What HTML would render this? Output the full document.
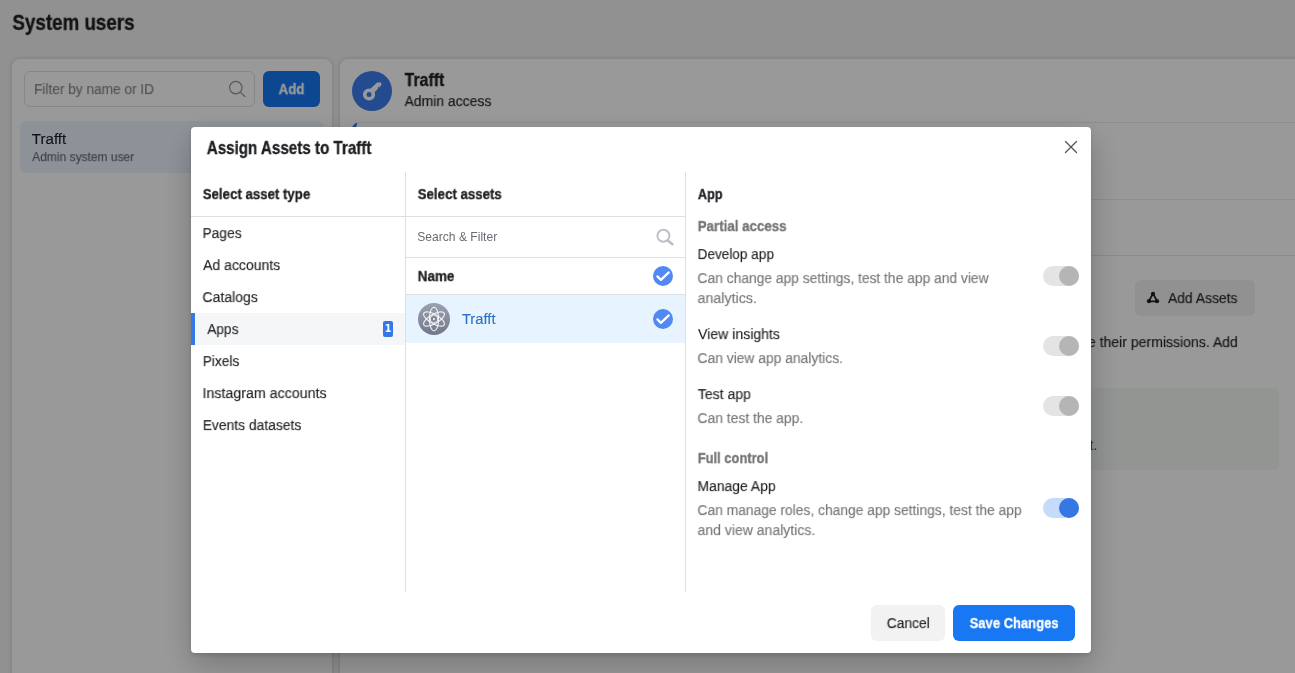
<!DOCTYPE html>
<html lang="en">
<head>
<meta charset="utf-8">
<title>System users</title>
<style>
*{box-sizing:border-box;margin:0;padding:0}
html,body{width:1295px;height:673px;overflow:hidden}
body{background:#f2f2f2;font-family:"Liberation Sans",sans-serif;color:#1c1e21;font-size:14px;position:relative}
.abs{position:absolute}
.t{position:absolute;white-space:nowrap;line-height:20px;transform-origin:0 50%;will-change:transform}
#page{position:absolute;left:0;top:0;width:1295px;height:673px;overflow:hidden}
#overlay{position:absolute;left:0;top:0;width:1295px;height:673px;background:rgba(0,0,0,.4)}
.panel{position:absolute;background:#fff;border-radius:8px;box-shadow:0 0 4px rgba(0,0,0,.16)}
.hl{position:absolute;height:1px;background:#dddfe2}
.vl{position:absolute;width:1px;background:#dddfe2}
#modal{position:absolute;left:191px;top:127px;width:900px;height:526px;background:#fff;border-radius:4px;box-shadow:0 12px 32px rgba(0,0,0,.23),0 2px 4px rgba(0,0,0,.12)}
.tog{position:absolute;width:36px;height:20px;border-radius:10px;background:#e4e4e4}
.tog b{position:absolute;right:0;top:0;width:20px;height:20px;border-radius:50%;background:#b5b5b5}
.tog.on{background:#c4dcfa}
.tog.on b{background:#3578e5}
</style>
</head>
<body>
<div id="page">
  <div class="t" style="left:12px;top:13px;font-size:20.60px;color:#1c1e21;transform-origin:0 17px;transform:translateX(0.41px) scale(0.9117,1.06);font-weight:bold;-webkit-text-stroke:.3px">System users</div>
  <div class="panel" style="left:12px;top:59px;width:320px;height:640px"></div>
  <div class="abs" style="left:24px;top:71px;width:231px;height:36px;border:1px solid #dddfe2;border-radius:6px;background:#fff"></div>
  <div class="t" style="left:34px;top:79px;font-size:14.42px;color:#84878c;transform-origin:0 15px;transform:translateX(0.03px) scale(0.9485,1.06);-webkit-text-stroke:.12px">Filter by name or ID</div>
  <svg class="abs" style="left:226px;top:78px" width="22" height="22" viewBox="0 0 22 22"><circle cx="9.8" cy="9.6" r="6.2" fill="none" stroke="#8d949e" stroke-width="1.2"/><path d="M14.3 14.1l4.6 4.4" stroke="#8d949e" stroke-width="1.2" stroke-linecap="round"/></svg>
  <div class="abs" style="left:263px;top:71px;width:57px;height:36px;border-radius:6px;background:#1877f2"></div>
  <div class="t" style="left:278px;top:79px;font-size:14.42px;color:#fff;transform-origin:0 15px;transform:translateX(0.61px) scale(0.9184,1.06);font-weight:bold;-webkit-text-stroke:.3px">Add</div>
  <div class="abs" style="left:20px;top:121px;width:304px;height:52px;border-radius:6px;background:#ecf3ff"></div>
  <div class="t" style="left:31px;top:129px;font-size:14.42px;color:#1c1e21;transform-origin:0 15px;transform:translateX(0.87px) scale(1.0471,1.06);-webkit-text-stroke:.12px">Trafft</div>
  <div class="t" style="left:32px;top:147px;font-size:12.36px;color:#606770;transform-origin:0 14px;transform:translateX(0.20px) scale(0.9704,1.06);-webkit-text-stroke:.12px">Admin system user</div>

  <div class="panel" style="left:340px;top:59px;width:980px;height:640px"></div>
  <div class="abs" style="left:352px;top:70.7px;width:40px;height:40px;border-radius:50%;background:#3c7dee"></div>
  <svg class="abs" style="left:352px;top:70.7px" width="40" height="40" viewBox="0 0 40 40"><circle cx="17.05" cy="23.5" r="4.3" fill="none" stroke="#fff" stroke-width="3.6"/><path d="M17.6 18.5L25.1 11.5H29.3V14.3L27.1 16.6L26.5 16 25.6 16.9 26.2 17.5 22 21.8Z" fill="#fff"/></svg>
  <div class="t" style="left:404px;top:70px;font-size:16.48px;color:#1c1e21;transform-origin:0 16px;transform:translateX(0.60px) scale(0.9630,1.06);font-weight:bold;-webkit-text-stroke:.3px">Trafft</div>
  <div class="t" style="left:404px;top:91px;font-size:14.42px;color:#1c1e21;transform-origin:0 15px;transform:translateX(0.60px) scale(0.9675,1.06);-webkit-text-stroke:.12px">Admin access</div>
  <div class="hl" style="left:357px;top:122px;width:960px;background:#e9ebee"></div>
  <svg class="abs" style="left:351px;top:122px" width="8" height="6" viewBox="0 0 8 6"><path d="M.8 5.5Q2.6 2 5.2 .8Q6.4 .5 6.2 1.6L5.2 5.5Z" fill="#3c7dee"/></svg>
  <div class="hl" style="left:340px;top:199px;width:960px;background:#e9ebee"></div>
  <div class="hl" style="left:340px;top:255px;width:960px;background:#e4e6e9"></div>
  <div class="abs" style="left:1135px;top:280px;width:120px;height:36px;border-radius:6px;background:#f2f2f2"></div>
  <svg class="abs" style="left:1146px;top:291px" width="14" height="14" viewBox="0 0 14 14"><path d="M7 2.6L2.7 10.4H11.3Z" fill="none" stroke="#1c1e21" stroke-width="1.8" stroke-linejoin="round"/><circle cx="7" cy="2.8" r="2.1" fill="#1c1e21"/><circle cx="3" cy="10.2" r="2.1" fill="#1c1e21"/><circle cx="11" cy="10.2" r="2.1" fill="#1c1e21"/></svg>
  <div class="t" style="left:1168px;top:288px;font-size:14.42px;color:#1c1e21;transform-origin:0 15px;transform:translateX(0.00px) scale(0.9644,1.06);-webkit-text-stroke:.12px">Add Assets</div>
  <div class="t" style="left:1045px;top:332px;font-size:14.42px;color:#1c1e21;transform-origin:0 15px;transform:translateX(0.02px) scale(0.9747,1.06);-webkit-text-stroke:.12px">manage their permissions. Add</div>
  <div class="abs" style="left:900px;top:388px;width:379px;height:82px;border-radius:5px;background:#f5f8f6"></div>
  <div class="t" style="left:1060px;top:435px;width:37px;text-align:right;color:#4b4f56">asset.</div>
</div>
<div id="overlay"></div>
<div id="modal">
  <div class="t" style="left:15px;top:11px;font-size:16.48px;color:#1c1e21;transform-origin:0 16px;transform:translateX(0.76px) scale(0.9210,1.06);font-weight:bold;-webkit-text-stroke:.3px">Assign Assets to Trafft</div>
  <svg class="abs" style="left:873px;top:13px" width="14" height="14" viewBox="0 0 14 14"><path d="M1.5 1.5l11 11M12.5 1.5L1.5 12.5" stroke="#50545d" stroke-width="1.3" stroke-linecap="round"/></svg>

  <div class="vl" style="left:214px;top:45px;height:420px"></div>
  <div class="vl" style="left:494px;top:45px;height:420px"></div>
  <div class="hl" style="left:0;top:89px;width:494px"></div>

  <div class="t" style="left:11px;top:57px;font-size:14.42px;color:#1c1e21;transform-origin:0 15px;transform:translateX(0.76px) scale(0.9191,1.06);font-weight:bold;-webkit-text-stroke:.3px">Select asset type</div>
  <div class="abs" style="left:0;top:186px;width:214px;height:32px;background:#f5f6f7"></div>
  <div class="abs" style="left:0;top:186px;width:4px;height:32px;background:#3578e5"></div>
  <div class="t" style="left:11px;top:96px;font-size:14.42px;color:#1c1e21;transform-origin:0 15px;transform:translateX(0.53px) scale(0.9542,1.06);-webkit-text-stroke:.12px">Pages</div>
  <div class="t" style="left:12px;top:128px;font-size:14.42px;color:#1c1e21;transform-origin:0 15px;transform:translateX(0.10px) scale(0.9734,1.06);-webkit-text-stroke:.12px">Ad accounts</div>
  <div class="t" style="left:11px;top:160px;font-size:14.42px;color:#1c1e21;transform-origin:0 15px;transform:translateX(0.43px) scale(0.9719,1.06);-webkit-text-stroke:.12px">Catalogs</div>
  <div class="t" style="left:16px;top:192px;font-size:14.42px;color:#1c1e21;transform-origin:0 15px;transform:translateX(0.30px) scale(0.9473,1.06);-webkit-text-stroke:.12px">Apps</div>
  <div class="abs" style="left:192px;top:194px;width:10px;height:16px;border-radius:2px;background:#3578e5"></div>
  <div class="t" style="left:192px;top:196px;width:10px;text-align:center;font-family:'DejaVu Sans',sans-serif;font-weight:bold;font-size:11px;line-height:12px;color:#fff;transform:scaleX(.85);transform-origin:50% 50%">1</div>
  <div class="t" style="left:11px;top:224px;font-size:14.42px;color:#1c1e21;transform-origin:0 15px;transform:translateX(0.73px) scale(0.9517,1.06);-webkit-text-stroke:.12px">Pixels</div>
  <div class="t" style="left:11px;top:256px;font-size:14.42px;color:#1c1e21;transform-origin:0 15px;transform:translateX(0.50px) scale(0.9874,1.06);-webkit-text-stroke:.12px">Instagram accounts</div>
  <div class="t" style="left:11px;top:288px;font-size:14.42px;color:#1c1e21;transform-origin:0 15px;transform:translateX(0.72px) scale(0.9622,1.06);-webkit-text-stroke:.12px">Events datasets</div>

  <div class="t" style="left:226px;top:57px;font-size:14.42px;color:#1c1e21;transform-origin:0 15px;transform:translateX(0.75px) scale(0.9200,1.06);font-weight:bold;-webkit-text-stroke:.3px">Select assets</div>
  <div class="t" style="left:226px;top:100px;font-size:12.00px;color:#686c73;transform-origin:0 14px;transform:translateX(0.30px) scale(1.0070,1)">Search &amp; Filter</div>
  <svg class="abs" style="left:464px;top:100px" width="20" height="20" viewBox="0 0 20 20"><circle cx="8.4" cy="8.8" r="6" fill="none" stroke="#bcc0c6" stroke-width="2"/><path d="M13.4 14l4 3.2" stroke="#bcc0c6" stroke-width="2.6" stroke-linecap="round"/></svg>
  <div class="hl" style="left:215px;top:130px;width:279px"></div>
  <div class="t" style="left:226px;top:139px;font-size:14.42px;color:#1c1e21;transform-origin:0 15px;transform:translateX(0.73px) scale(0.9319,1.06);font-weight:bold;-webkit-text-stroke:.3px">Name</div>
  <div class="hl" style="left:215px;top:167px;width:279px"></div>
  <div class="abs" style="left:215px;top:168px;width:279px;height:48px;background:#e7f3ff"></div>
  <div class="abs" style="left:227px;top:176px;width:32px;height:32px;border-radius:50%;background:linear-gradient(#9aa2b2,#70788a)"></div>
  <svg class="abs" style="left:227px;top:176px" width="32" height="32" viewBox="0 0 32 32"><g fill="none" stroke="#fff" stroke-opacity=".88" stroke-width="1.1"><ellipse cx="16" cy="16" rx="4.6" ry="11.8"/><ellipse cx="16" cy="16" rx="4.6" ry="11.8" transform="rotate(60 16 16)"/><ellipse cx="16" cy="16" rx="4.6" ry="11.8" transform="rotate(-60 16 16)"/></g><path d="M16 12l3.5 2v4L16 20l-3.5-2v-4z" fill="#80889a" stroke="#fff" stroke-opacity=".85" stroke-width=".9"/><path d="M16 14.9l1 .6v1.1l-1 .6-1-.6v-1.1z" fill="#fff" fill-opacity=".9"/></svg>
  <div class="t" style="left:270px;top:182px;font-size:14.42px;color:#2e72c2;transform-origin:0 15px;transform:translateX(0.88px) scale(1.0255,1.06);-webkit-text-stroke:.12px">Trafft</div>
  <svg class="abs" style="left:462px;top:139px" width="20" height="20" viewBox="0 0 20 20"><circle cx="10" cy="10" r="10" fill="#5288f2"/><path d="M4.4 10.4l3.5 3.5 7.9-7.5" fill="none" stroke="#fff" stroke-width="2.2" stroke-linecap="round" stroke-linejoin="round"/></svg>
  <svg class="abs" style="left:462px;top:182px" width="20" height="20" viewBox="0 0 20 20"><circle cx="10" cy="10" r="10" fill="#5288f2"/><path d="M4.4 10.4l3.5 3.5 7.9-7.5" fill="none" stroke="#fff" stroke-width="2.2" stroke-linecap="round" stroke-linejoin="round"/></svg>

  <div class="t" style="left:506px;top:57px;font-size:14.42px;color:#1c1e21;transform-origin:0 15px;transform:translateX(0.83px) scale(0.8800,1.06);font-weight:bold;-webkit-text-stroke:.3px">App</div>
  <div class="t" style="left:506px;top:89px;font-size:14.42px;color:#737373;transform-origin:0 15px;transform:translateX(0.73px) scale(0.9251,1.06);font-weight:bold;-webkit-text-stroke:.3px">Partial access</div>
  <div class="t" style="left:506px;top:117px;font-size:14.42px;color:#1c1e21;transform-origin:0 15px;transform:translateX(0.54px) scale(0.9449,1.06);-webkit-text-stroke:.12px">Develop app</div>
  <div class="t" style="left:506px;top:141px;font-size:14.42px;color:#757575;transform-origin:0 15px;transform:translateX(0.44px) scale(0.9590,1.06);-webkit-text-stroke:.12px">Can change app settings, test the app and view</div>
  <div class="t" style="left:506px;top:161px;font-size:14.42px;color:#757575;transform-origin:0 15px;transform:translateX(0.54px) scale(0.9882,1.06);-webkit-text-stroke:.12px">analytics.</div>
  <div class="tog" style="left:852px;top:139px"><b></b></div>
  <div class="t" style="left:507px;top:197px;font-size:14.42px;color:#1c1e21;transform-origin:0 15px;transform:translateX(0.04px) scale(0.9776,1.06);-webkit-text-stroke:.12px">View insights</div>
  <div class="t" style="left:506px;top:221px;font-size:14.42px;color:#757575;transform-origin:0 15px;transform:translateX(0.44px) scale(0.9616,1.06);-webkit-text-stroke:.12px">Can view app analytics.</div>
  <div class="tog" style="left:852px;top:209px"><b></b></div>
  <div class="t" style="left:506px;top:257px;font-size:14.42px;color:#1c1e21;transform-origin:0 15px;transform:translateX(0.80px) scale(0.9736,1.06);-webkit-text-stroke:.12px">Test app</div>
  <div class="t" style="left:506px;top:281px;font-size:14.42px;color:#757575;transform-origin:0 15px;transform:translateX(0.44px) scale(0.9631,1.06);-webkit-text-stroke:.12px">Can test the app.</div>
  <div class="tog" style="left:852px;top:269px"><b></b></div>
  <div class="t" style="left:506px;top:321px;font-size:14.42px;color:#737373;transform-origin:0 15px;transform:translateX(0.76px) scale(0.8974,1.06);font-weight:bold;-webkit-text-stroke:.3px">Full control</div>
  <div class="t" style="left:506px;top:349px;font-size:14.42px;color:#1c1e21;transform-origin:0 15px;transform:translateX(0.52px) scale(0.9642,1.06);-webkit-text-stroke:.12px">Manage App</div>
  <div class="t" style="left:506px;top:373px;font-size:14.42px;color:#757575;transform-origin:0 15px;transform:translateX(0.44px) scale(0.9590,1.06);-webkit-text-stroke:.12px">Can manage roles, change app settings, test the app</div>
  <div class="t" style="left:506px;top:393px;font-size:14.42px;color:#757575;transform-origin:0 15px;transform:translateX(0.55px) scale(0.9731,1.06);-webkit-text-stroke:.12px">and view analytics.</div>
  <div class="tog on" style="left:852px;top:371px"><b></b></div>

  <div class="abs" style="left:680px;top:478px;width:74px;height:36px;border-radius:6px;background:#f2f2f2"></div>
  <div class="t" style="left:695px;top:486px;font-size:14.42px;color:#1c1e21;transform-origin:0 15px;transform:translateX(0.74px) scale(0.9550,1.06);-webkit-text-stroke:.12px">Cancel</div>
  <div class="abs" style="left:762px;top:478px;width:122px;height:36px;border-radius:6px;background:#1877f2"></div>
  <div class="t" style="left:778px;top:486px;font-size:14.42px;color:#fff;transform-origin:0 15px;transform:translateX(0.66px) scale(0.9024,1.06);font-weight:bold;-webkit-text-stroke:.3px">Save Changes</div>
</div>
</body>
</html>
